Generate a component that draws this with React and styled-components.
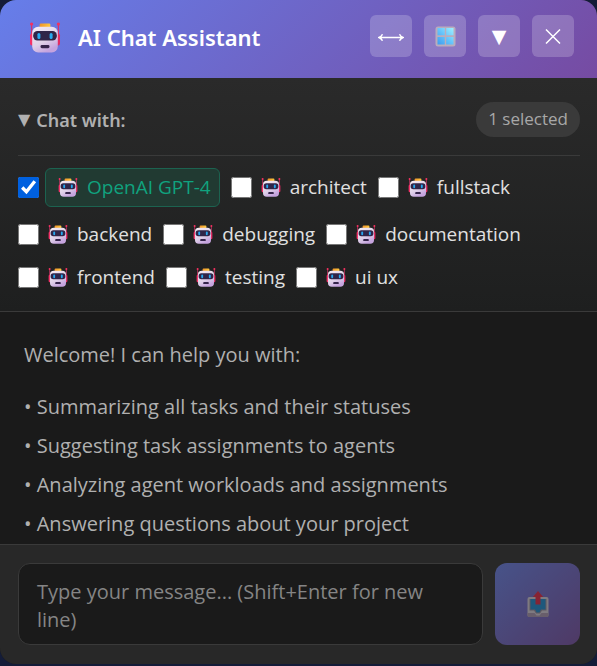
import React, { useState } from "react";
import styled, { createGlobalStyle, css } from "styled-components";

const GlobalStyle = createGlobalStyle`
  * { box-sizing: border-box; }
  body {
    margin: 0;
    background: #141c38;
    color: #e0e0e0;
    font-family: "Open Sans", "Noto Sans", sans-serif;
  }
  button, textarea { font-family: inherit; }
`;

const Panel = styled.section`
  display: flex;
  flex-direction: column;
  height: calc(100vh - 2px);
  overflow: hidden;
  border-radius: 16px;
  background: #1a1a1a;
`;

const Header = styled.header`
  display: flex;
  align-items: flex-start;
  justify-content: space-between;
  flex: none;
  padding: 15px 23px 21px 29px;
  background: linear-gradient(135deg, #667eea 0%, #764ba2 100%);
`;

const Brand = styled.div`
  display: flex;
  align-items: center;
  gap: 17px;
  padding-top: 6px;
`;

const Title = styled.h1`
  margin: 0;
  color: #fff;
  font-family: "Noto Sans", sans-serif;
  font-size: 22px;
  line-height: 32px;
  font-weight: 600;
  white-space: nowrap;
`;

const Actions = styled.div`
  display: flex;
  gap: 12px;
`;

const IconButton = styled.button`
  display: flex;
  align-items: center;
  justify-content: center;
  width: 42px;
  height: 42px;
  padding: 0;
  border: 0;
  border-radius: 6px;
  background: rgba(255, 255, 255, 0.2);
  color: #fff;
  cursor: pointer;
`;

const Triangle = styled.span`
  font-family: "DejaVu Sans", sans-serif;
  font-size: ${(p) => (p.$small ? "16px" : "19px")};
  line-height: 20px;
  font-weight: 400;
`;

const Selector = styled.section`
  flex: none;
  padding: 24px 17px 18px 18px;
  border-bottom: 1px solid #3a3a3a;
  background: linear-gradient(#2a2a2a, #1e1f1f);
`;

const SelectorHead = styled.div`
  display: flex;
  align-items: center;
  justify-content: space-between;
  padding-bottom: 18px;
  border-bottom: 1px solid #3a3a3a;
`;

const Toggle = styled.button`
  display: flex;
  align-items: center;
  gap: 6px;
  padding: 0;
  border: 0;
  background: none;
  color: #b0b0b0;
  font-family: "Noto Sans", sans-serif;
  font-size: 18px;
  line-height: 24px;
  font-weight: 600;
  cursor: pointer;
`;

const Badge = styled.span`
  padding: 5px 12px 6px;
  border-radius: 18px;
  background: #3a3a3a;
  color: #a8a8a8;
  font-size: 17px;
  line-height: 24px;
`;

const Agents = styled.div`
  display: flex;
  flex-wrap: wrap;
  gap: 12px 11px;
  padding-top: 12px;
`;

const Agent = styled.label`
  display: flex;
  align-items: center;
  gap: 6px;
  cursor: pointer;
`;

const Checkbox = styled.input`
  flex: none;
  width: 21px;
  height: 21px;
  margin: 0;
  accent-color: #0060df;
`;

const AgentName = styled.span`
  display: flex;
  align-items: center;
  gap: 9px;
  padding: 3px 0 4px 3px;
  font-size: 19px;
  line-height: 24px;
  white-space: nowrap;
  ${(p) =>
    p.$selected &&
    css`
      padding: 6px 8px 7px 12px;
      border: 1px solid #1c6350;
      border-radius: 6px;
      background: #213a32;
      color: #10a37f;
    `}
`;

const Messages = styled.main`
  flex: 1;
  min-height: 0;
  overflow: hidden;
  padding: 26px 24px 0;
  color: #b0b0b0;
  font-size: 20px;
  line-height: 33px;
`;

const Intro = styled.p`
  margin: 0 0 19px;
`;

const Topics = styled.ul`
  display: flex;
  flex-direction: column;
  gap: 6px;
  margin: 0;
  padding: 0;
  list-style: none;
`;

const Composer = styled.form`
  display: flex;
  flex: none;
  gap: 12px;
  padding: 18px 17px 19px 18px;
  border-top: 1px solid #3a3a3a;
  background: #282828;
`;

const MessageInput = styled.textarea`
  flex: 1;
  min-width: 0;
  height: 82px;
  padding: 14px 18px;
  border: 1px solid #3a3a3a;
  border-radius: 12px;
  outline: 0;
  resize: none;
  overflow: hidden;
  background: #1a1a1a;
  color: #e0e0e0;
  font-size: 20px;
  line-height: 28px;
  &::placeholder { color: #858585; }
`;

const SendButton = styled.button`
  display: flex;
  align-items: center;
  justify-content: center;
  flex: none;
  width: 85px;
  border: 0;
  border-radius: 12px;
  background: linear-gradient(135deg, #667eea 0%, #764ba2 100%);
  opacity: 0.5;
`;

function Robot({ size }) {
  return (
    <svg width={size} height={size} viewBox="0 0 32 32" aria-hidden="true">
      <defs>
        <linearGradient id="face" x1="0" y1="0" x2="0.5" y2="1">
          <stop offset="0" stopColor="#f5edf5" />
          <stop offset="0.65" stopColor="#dfd0e8" />
          <stop offset="1" stopColor="#c5a3de" />
        </linearGradient>
        <linearGradient id="cap" x1="0" x2="1">
          <stop offset="0" stopColor="#f0952a" />
          <stop offset="1" stopColor="#ffc83d" />
        </linearGradient>
      </defs>
      <path d="M2.6 3v12M29.4 3v12" stroke="#d8336a" strokeWidth="1.2" />
      <circle cx="2.6" cy="3" r="1.6" fill="#f4315f" />
      <circle cx="29.4" cy="3" r="1.6" fill="#f4315f" />
      <rect x="1" y="12.5" width="5" height="12" rx="2" fill="#f53268" />
      <rect x="26" y="12.5" width="5" height="12" rx="2" fill="#e22c62" />
      <rect x="10.6" y="2.4" width="10.8" height="5" rx="1.4" fill="url(#cap)" />
      <rect x="3.2" y="5.8" width="25.6" height="25.6" rx="6" fill="url(#face)" />
      <rect x="4.2" y="10" width="23.6" height="9.4" rx="4.2" fill="#302548" />
      <rect x="8.4" y="12" width="3" height="6" rx="1.5" fill="#27a9f0" />
      <rect x="20.6" y="12" width="3" height="6" rx="1.5" fill="#27a9f0" />
      <rect x="11.5" y="24" width="9" height="3.2" rx="1.4" fill="#35244b" />
    </svg>
  );
}

function WidthIcon() {
  return (
    <svg width="26" height="12" viewBox="0 0 26 12" fill="none" stroke="#fff" strokeWidth="1.5" aria-hidden="true">
      <path d="M1 7.5h24M4.5 4.3Q3.5 6.5 1 7.5Q3.5 8.5 4.5 10.7M21.5 4.3Q22.5 6.5 25 7.5Q22.5 8.5 21.5 10.7" />
    </svg>
  );
}

function WindowIcon() {
  return (
    <svg width="21" height="21" viewBox="0 0 21 21" aria-hidden="true">
      <defs>
        <linearGradient id="pane" x1="0" y1="1" x2="1" y2="0">
          <stop offset="0" stopColor="#3d9bef" />
          <stop offset="0.5" stopColor="#66c5fb" />
          <stop offset="1" stopColor="#9ff1ff" />
        </linearGradient>
      </defs>
      <rect x="0.5" y="0.5" width="20" height="20" rx="2.5" fill="#b9adbd" />
      <path d="M2.5 2h7.3v7.3H2.5zM11.2 2h7.3v7.3h-7.3zM2.5 11h7.3v7.5H2.5zM11.2 11h7.3v7.5h-7.3z" fill="url(#pane)" />
    </svg>
  );
}

function CloseIcon() {
  return (
    <svg width="16" height="16" viewBox="0 0 16 16" fill="none" stroke="#fff" strokeWidth="1.5" aria-hidden="true">
      <path d="M1 1.5l14 14M15 1.5L1 15.5" />
    </svg>
  );
}

function OutboxIcon() {
  return (
    <svg width="22" height="28" viewBox="0 0 22 28" aria-hidden="true">
      <rect x="0.5" y="7" width="21" height="20" rx="2" fill="#d3cbd8" />
      <path d="M2.5 9h17v11.5h-4.5l-2 3h-4l-2-3H2.5z" fill="#928998" />
      <path d="M3.5 9h15v10.5h-4.5l-1.6 3H9.6l-1.6-3H3.5z" fill="#1688cf" />
      <path d="M0.5 23h7l2 2.5h3l2-2.5h7v2.5a1.5 1.5 0 0 1-1.5 1.5H2a1.5 1.5 0 0 1-1.5-1.5z" fill="#a895ae" />
      <path d="M11 1L5.8 7h2.7v7.5h5V7h2.7z" fill="#e4203f" />
    </svg>
  );
}

const AGENTS = [
  "OpenAI GPT-4",
  "architect",
  "fullstack",
  "backend",
  "debugging",
  "documentation",
  "frontend",
  "testing",
  "ui ux",
];

const TOPICS = [
  "Summarizing all tasks and their statuses",
  "Suggesting task assignments to agents",
  "Analyzing agent workloads and assignments",
  "Answering questions about your project",
];

export default function App() {
  const [selected, setSelected] = useState(["OpenAI GPT-4"]);
  const [open, setOpen] = useState(true);
  const [message, setMessage] = useState("");

  const toggleAgent = (name) =>
    setSelected((list) =>
      list.includes(name) ? list.filter((n) => n !== name) : [...list, name]
    );

  return (
    <>
      <GlobalStyle />
      <Panel>
        <Header>
          <Brand>
            <Robot size={32} />
            <Title>AI Chat Assistant</Title>
          </Brand>
          <Actions>
            <IconButton type="button" aria-label="Change width"><WidthIcon /></IconButton>
            <IconButton type="button" aria-label="Window layout"><WindowIcon /></IconButton>
            <IconButton type="button" aria-label="Minimize"><Triangle>▼</Triangle></IconButton>
            <IconButton type="button" aria-label="Close"><CloseIcon /></IconButton>
          </Actions>
        </Header>
        <Selector>
          <SelectorHead>
            <Toggle type="button" aria-expanded={open} onClick={() => setOpen(!open)}>
              <Triangle $small>▼</Triangle>
              Chat with:
            </Toggle>
            <Badge>{selected.length} selected</Badge>
          </SelectorHead>
          {open && (
            <Agents>
              {AGENTS.map((name) => (
                <Agent key={name}>
                  <Checkbox
                    type="checkbox"
                    checked={selected.includes(name)}
                    onChange={() => toggleAgent(name)}
                  />
                  <AgentName $selected={selected.includes(name)}>
                    <Robot size={20} />
                    {name}
                  </AgentName>
                </Agent>
              ))}
            </Agents>
          )}
        </Selector>
        <Messages>
          <Intro>Welcome! I can help you with:</Intro>
          <Topics>
            {TOPICS.map((topic) => (
              <li key={topic}>• {topic}</li>
            ))}
          </Topics>
        </Messages>
        <Composer onSubmit={(e) => e.preventDefault()}>
          <MessageInput
            aria-label="Message"
            placeholder="Type your message... (Shift+Enter for new line)"
            value={message}
            onChange={(e) => setMessage(e.target.value)}
          />
          <SendButton type="submit" aria-label="Send" disabled={!message}>
            <OutboxIcon />
          </SendButton>
        </Composer>
      </Panel>
    </>
  );
}
